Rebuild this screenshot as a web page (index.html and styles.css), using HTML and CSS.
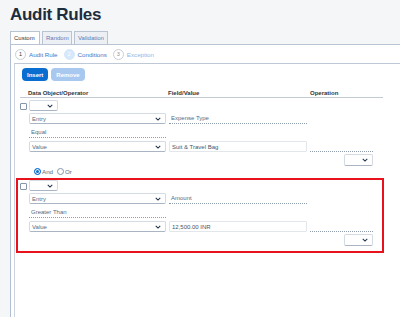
FILE: index.html
```html
<!DOCTYPE html>
<html lang="en">
<head>
  <meta charset="UTF-8">
  <title>Audit Rules</title>
  <link rel="stylesheet" href="styles.css">
</head>
<body>
  <h1 class="title">Audit Rules</h1>

  <div class="tabs">
    <div class="tab active">Custom</div>
    <div class="tab">Random</div>
    <div class="tab">Validation</div>
  </div>

  <div class="panel">
    <!-- wizard steps -->
    <div class="steps">
      <div class="step done"><span class="num">1</span>Audit Rule</div>
      <div class="step current"><span class="num">2</span>Conditions</div>
      <div class="step next"><span class="num">3</span>Exception</div>
    </div>

    <div class="inner">
      <div class="toolbar">
        <button class="btn">Insert</button>
        <button class="btn disabled">Remove</button>
      </div>

      <div class="table">
        <div class="head">
          <span class="h1c">Data Object/Operator</span>
          <span class="h2c">Field/Value</span>
          <span class="h3c">Operation</span>
        </div>

        <div class="cond">
          <div class="row">
            <span class="check"></span>
            <div class="select tiny"><span></span><svg viewBox="0 0 8 5"><polyline points="1,1 4,4 7,1"/></svg></div>
          </div>
          <div class="row">
            <span></span>
            <div class="select"><span>Entry</span><svg viewBox="0 0 8 5"><polyline points="1,1 4,4 7,1"/></svg></div>
            <div class="field">Expense Type</div>
          </div>
          <div class="row label-row">
            <span></span>
            <div class="field">Equal</div>
          </div>
          <div class="row">
            <span></span>
            <div class="select"><span>Value</span><svg viewBox="0 0 8 5"><polyline points="1,1 4,4 7,1"/></svg></div>
            <div class="input">Suit &amp; Travel Bag</div>
            <div class="field empty"></div>
          </div>
          <div class="row op-row">
            <div class="select tiny"><span></span><svg viewBox="0 0 8 5"><polyline points="1,1 4,4 7,1"/></svg></div>
          </div>
        </div>

        <div class="logic">
          <span class="radio on"></span>And
          <span class="radio"></span>Or
        </div>

        <div class="cond marked">
          <div class="row">
            <span class="check"></span>
            <div class="select tiny"><span></span><svg viewBox="0 0 8 5"><polyline points="1,1 4,4 7,1"/></svg></div>
          </div>
          <div class="row">
            <span></span>
            <div class="select"><span>Entry</span><svg viewBox="0 0 8 5"><polyline points="1,1 4,4 7,1"/></svg></div>
            <div class="field">Amount</div>
          </div>
          <div class="row label-row">
            <span></span>
            <div class="field">Greater Than</div>
          </div>
          <div class="row">
            <span></span>
            <div class="select"><span>Value</span><svg viewBox="0 0 8 5"><polyline points="1,1 4,4 7,1"/></svg></div>
            <div class="input">12,500.00 INR</div>
            <div class="field empty"></div>
          </div>
          <div class="row op-row">
            <div class="select tiny"><span></span><svg viewBox="0 0 8 5"><polyline points="1,1 4,4 7,1"/></svg></div>
          </div>
        </div>
      </div>
    </div>
  </div>
</body>
</html>
```

FILE: styles.css
```css
html, body {
  height: 100%;
}

body {
  margin: 0;
  background-color: #f5f6f7;
  font-family: 'Liberation Sans', Arial, sans-serif;
  color: #32363a;
  display: flex;
  flex-direction: column;
  overflow: hidden;
}

.title {
  margin: 5px 0 0 10px;
  font-size: 17px;
  line-height: 20px;
  letter-spacing: -0.3px;
  color: #1d2d3e;
}

/* Tabs */
.tabs {
  display: flex;
  gap: 2px;
  margin: 6px 0 0 10px;
}

.tab {
  height: 12px;
  padding: 0 3px;
  border: 1px solid #b9c4d3;
  border-bottom: none;
  background-color: #eceff3;
  color: #5b7ab8;
  font-size: 6px;
  line-height: 13px;
}

.tab:nth-child(1) { width: 22px; }
.tab:nth-child(2) { width: 22px; }
.tab:nth-child(3) { width: 26px; }

.tab.active {
  background-color: #fff;
  color: #32363a;
}

.panel {
  flex: 1;
  margin-left: 10px;
  border-left: 1px solid #b2bfd3;
  border-top: 1px solid #b9c4d3;
  background-color: #fff;
  display: flex;
  flex-direction: column;
}

/* Wizard steps */
.steps {
  height: 18px;
  display: flex;
  align-items: center;
  padding-left: 4px;
  gap: 6px;
  font-size: 6.2px;
}

.step {
  display: flex;
  align-items: center;
  gap: 3px;
  color: #3e78c9;
}

.step .num {
  width: 9px;
  height: 9px;
  border-radius: 50%;
  border: 1px solid #c9cfd6;
  display: flex;
  align-items: center;
  justify-content: center;
  color: #32363a;
  font-size: 5.5px;
}

.step.current .num {
  background-color: #d6e8fb;
  border-color: #d6e8fb;
  color: #fff;
}

.step.next {
  color: #8fb6e8;
}

.step.next .num {
  color: #8d96a0;
}

.inner {
  flex: 1;
  margin-left: 3px;
  border-left: 1px solid #ccd4df;
  border-top: 1px solid #bec8d6;
  padding: 4px 0 0 1px;
}

/* Toolbar */
.toolbar {
  display: flex;
  gap: 3px;
  margin-left: 6px;
}

.btn {
  height: 13px;
  padding: 0 5px;
  border: none;
  border-radius: 4px;
  background-color: #0a6ed1;
  color: #fff;
  font-family: 'Liberation Sans', Arial, sans-serif;
  font-size: 6px;
  font-weight: bold;
}

.btn.disabled {
  background-color: #a9c8ef;
}

/* Condition table */
.table {
  width: 368px;
  font-size: 6px;
}

.head {
  display: grid;
  grid-template-columns: 9px 140px 141px 66px;
  margin: 5px 1px 0 4px;
  height: 10px;
  border-bottom: 1px solid #c3cad3;
  font-weight: bold;
  color: #32363a;
  align-items: end;
  padding-bottom: 1px;
}

.head .h1c { grid-column: 2; margin-left: -1px; }
.head .h2c { grid-column: 3; margin-left: -1px; }
.head .h3c { grid-column: 4; }

.cond {
  border: 2px solid transparent;
  padding: 0 2px;
  display: flex;
  flex-direction: column;
  gap: 3px;
}

.cond.marked {
  border-color: #e8121c;
  padding-bottom: 6px;
}

.row {
  display: grid;
  grid-template-columns: 9px 137px 3px 138px 3px 66px;
  height: 10px;
  align-items: center;
}

.row > :nth-child(3) { grid-column: 4; }
.row > :nth-child(4) { grid-column: 6; }

.row.label-row {
  height: 11px;
  margin-top: 1px;
}

.row.op-row {
  display: flex;
  justify-content: flex-end;
  height: 11px;
  padding-right: 7px;
}

.check {
  width: 5px;
  height: 5px;
  border: 1px solid #8796a8;
  border-radius: 1px;
  margin-top: 2px;
}

.select {
  height: 9px;
  border: 1px solid #d5dbe2;
  border-bottom-color: #aab5c3;
  border-radius: 2px;
  display: flex;
  align-items: center;
  justify-content: space-between;
  padding: 0 4px 0 2px;
  color: #556b82;
}

.select.tiny {
  width: 21px;
}

.op-row .select.tiny {
  height: 10px;
}

.select svg {
  width: 6px;
  height: 4px;
  fill: none;
  stroke: #223548;
  stroke-width: 1.4;
}

.field {
  height: 100%;
  box-sizing: border-box;
  border-bottom: 1px dotted #8e9bab;
  padding-left: 2px;
  color: #556b82;
  display: flex;
  align-items: center;
}

.field.empty {
  align-self: end;
  height: 1px;
  margin-right: 3px;
}

.input {
  height: 9px;
  border: 1px solid #e3e7ec;
  border-radius: 1px;
  padding-left: 2px;
  display: flex;
  align-items: center;
  color: #44566b;
}

/* And / Or */
.logic {
  display: flex;
  align-items: center;
  height: 8px;
  margin: 0 0 3px 18px;
  color: #556b82;
  font-size: 6.2px;
}

.radio {
  width: 5px;
  height: 5px;
  border: 1px solid #8796a8;
  border-radius: 50%;
  margin-right: 1px;
}

.radio.on {
  background-color: #0a6ed1;
  border-color: #0a6ed1;
  box-shadow: inset 0 0 0 1px #fff;
}

.logic .radio:not(.on) {
  margin-left: 4px;
}
```
